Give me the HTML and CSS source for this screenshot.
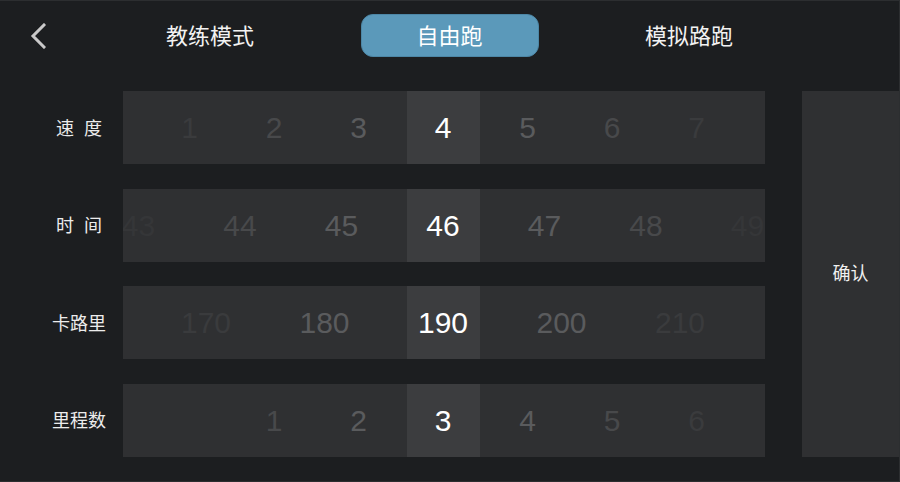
FILE: index.html
```html
<!DOCTYPE html>
<html lang="zh">
<head>
<meta charset="utf-8">
<title>自由跑</title>
<link rel="stylesheet" href="styles.css">
</head>
<body>
<div class="screen">
  <header class="header">
    <button class="back" aria-label="返回">
      <svg width="16" height="26" viewBox="0 0 16 26"><path d="M14 2 L3 13 L14 24" fill="none" stroke="#c9c9c9" stroke-width="3" stroke-linecap="square"/></svg>
    </button>
    <nav class="tabs">
      <div class="tab">教练模式</div>
      <div class="tab active">自由跑</div>
      <div class="tab">模拟路跑</div>
    </nav>
  </header>
  <main class="panel">
    <div class="label"><span class="spaced">速度</span></div>
    <div class="picker speed">
      <span class="cell d3">1</span><span class="cell d2">2</span><span class="cell d1">3</span><span class="cell sel">4</span><span class="cell d1">5</span><span class="cell d2">6</span><span class="cell d3">7</span>
    </div>
    <button class="confirm">确认</button>

    <div class="label"><span class="spaced">时间</span></div>
    <div class="picker time">
      <span class="cell d4">43</span><span class="cell d2">44</span><span class="cell d1">45</span><span class="cell sel">46</span><span class="cell d1">47</span><span class="cell d2">48</span><span class="cell d4">49</span>
    </div>

    <div class="label">卡路里</div>
    <div class="picker cal">
      <span class="cell d3">170</span><span class="cell d1">180</span><span class="cell sel">190</span><span class="cell d1">200</span><span class="cell d3">210</span>
    </div>

    <div class="label">里程数</div>
    <div class="picker speed">
      <span class="cell"></span><span class="cell d2">1</span><span class="cell d1">2</span><span class="cell sel">3</span><span class="cell d1">4</span><span class="cell d2">5</span><span class="cell d3">6</span>
    </div>
  </main>
</div>
</body>
</html>
```
FILE: styles.css
```css
html, body {
  margin: 0;
  padding: 0;
  background: #1c1e20;
}
.screen {
  width: 900px;
  height: 482px;
  box-sizing: border-box;
  border-top: 1px solid #2c2e30;
  border-right: 1px solid #2c2e30;
  border-bottom: 1px solid #2c2e30;
  background: #1c1e20;
  font-family: "Noto Sans CJK SC", "Noto Sans", sans-serif;
  color: #eeeeee;
  overflow: hidden;
}
.header {
  display: flex;
  align-items: center;
  padding: 13px 0 0 30px;
  height: 43px;
}
.back {
  width: 16px;
  height: 26px;
  padding: 0;
  margin: 0 75px 0 0;
  border: 0;
  background: none;
  display: flex;
}
.tabs {
  display: flex;
  gap: 61.5px;
}
.tab {
  width: 178px;
  height: 43px;
  box-sizing: border-box;
  display: flex;
  align-items: center;
  justify-content: center;
  padding-bottom: 3px;
  font-size: 22px;
  color: #f2f2f2;
  border-radius: 12px;
}
.tab.active {
  background: #5b99ba;
  border: 1px solid #4d87a6;
  color: #ffffff;
}
.panel {
  display: grid;
  grid-template-columns: 123px 642px 97px;
  grid-template-rows: repeat(4, 73px);
  column-gap: 0;
  row-gap: 24.67px;
  margin-top: 34px;
}
.panel .confirm {
  grid-column: 3;
  grid-row: 1 / 5;
  margin-left: 37px;
}
.label {
  padding-left: 35px;
  padding-bottom: 2px;
  display: flex;
  align-items: center;
  justify-content: center;
  font-size: 18px;
  color: #ececec;
}
.spaced {
  letter-spacing: 10px;
  margin-right: -10px;
}
.picker {
  position: relative;
  background: #2f3032;
  display: flex;
  justify-content: center;
  align-items: center;
  overflow: hidden;
  font-family: "Liberation Sans", Arial, sans-serif;
  font-size: 30px;
}
.picker::before {
  content: "";
  position: absolute;
  left: 284px;
  top: 0;
  width: 73px;
  height: 100%;
  background: #3c3d3f;
}
.cell {
  position: relative;
  flex: none;
  text-align: center;
  line-height: 73px;
  height: 73px;
  margin-left: -1px;
  margin-right: 1px;
}
.speed .cell { width: 84.5px; }
.time .cell { width: 101.5px; }
.cal .cell { width: 118.5px; }
.sel { color: #ffffff; }
.d1 { color: #5a5b5d; }
.d2 { color: #48494b; }
.d3 { color: #3a3b3d; }
.d4 { color: #353638; }
.confirm {
  width: 97px;
  border: 0;
  padding: 0 0 4px;
  background: #2f3032;
  color: #f0f0f0;
  font-family: "Noto Sans CJK SC", "Noto Sans", sans-serif;
  font-size: 18px;
}
```
